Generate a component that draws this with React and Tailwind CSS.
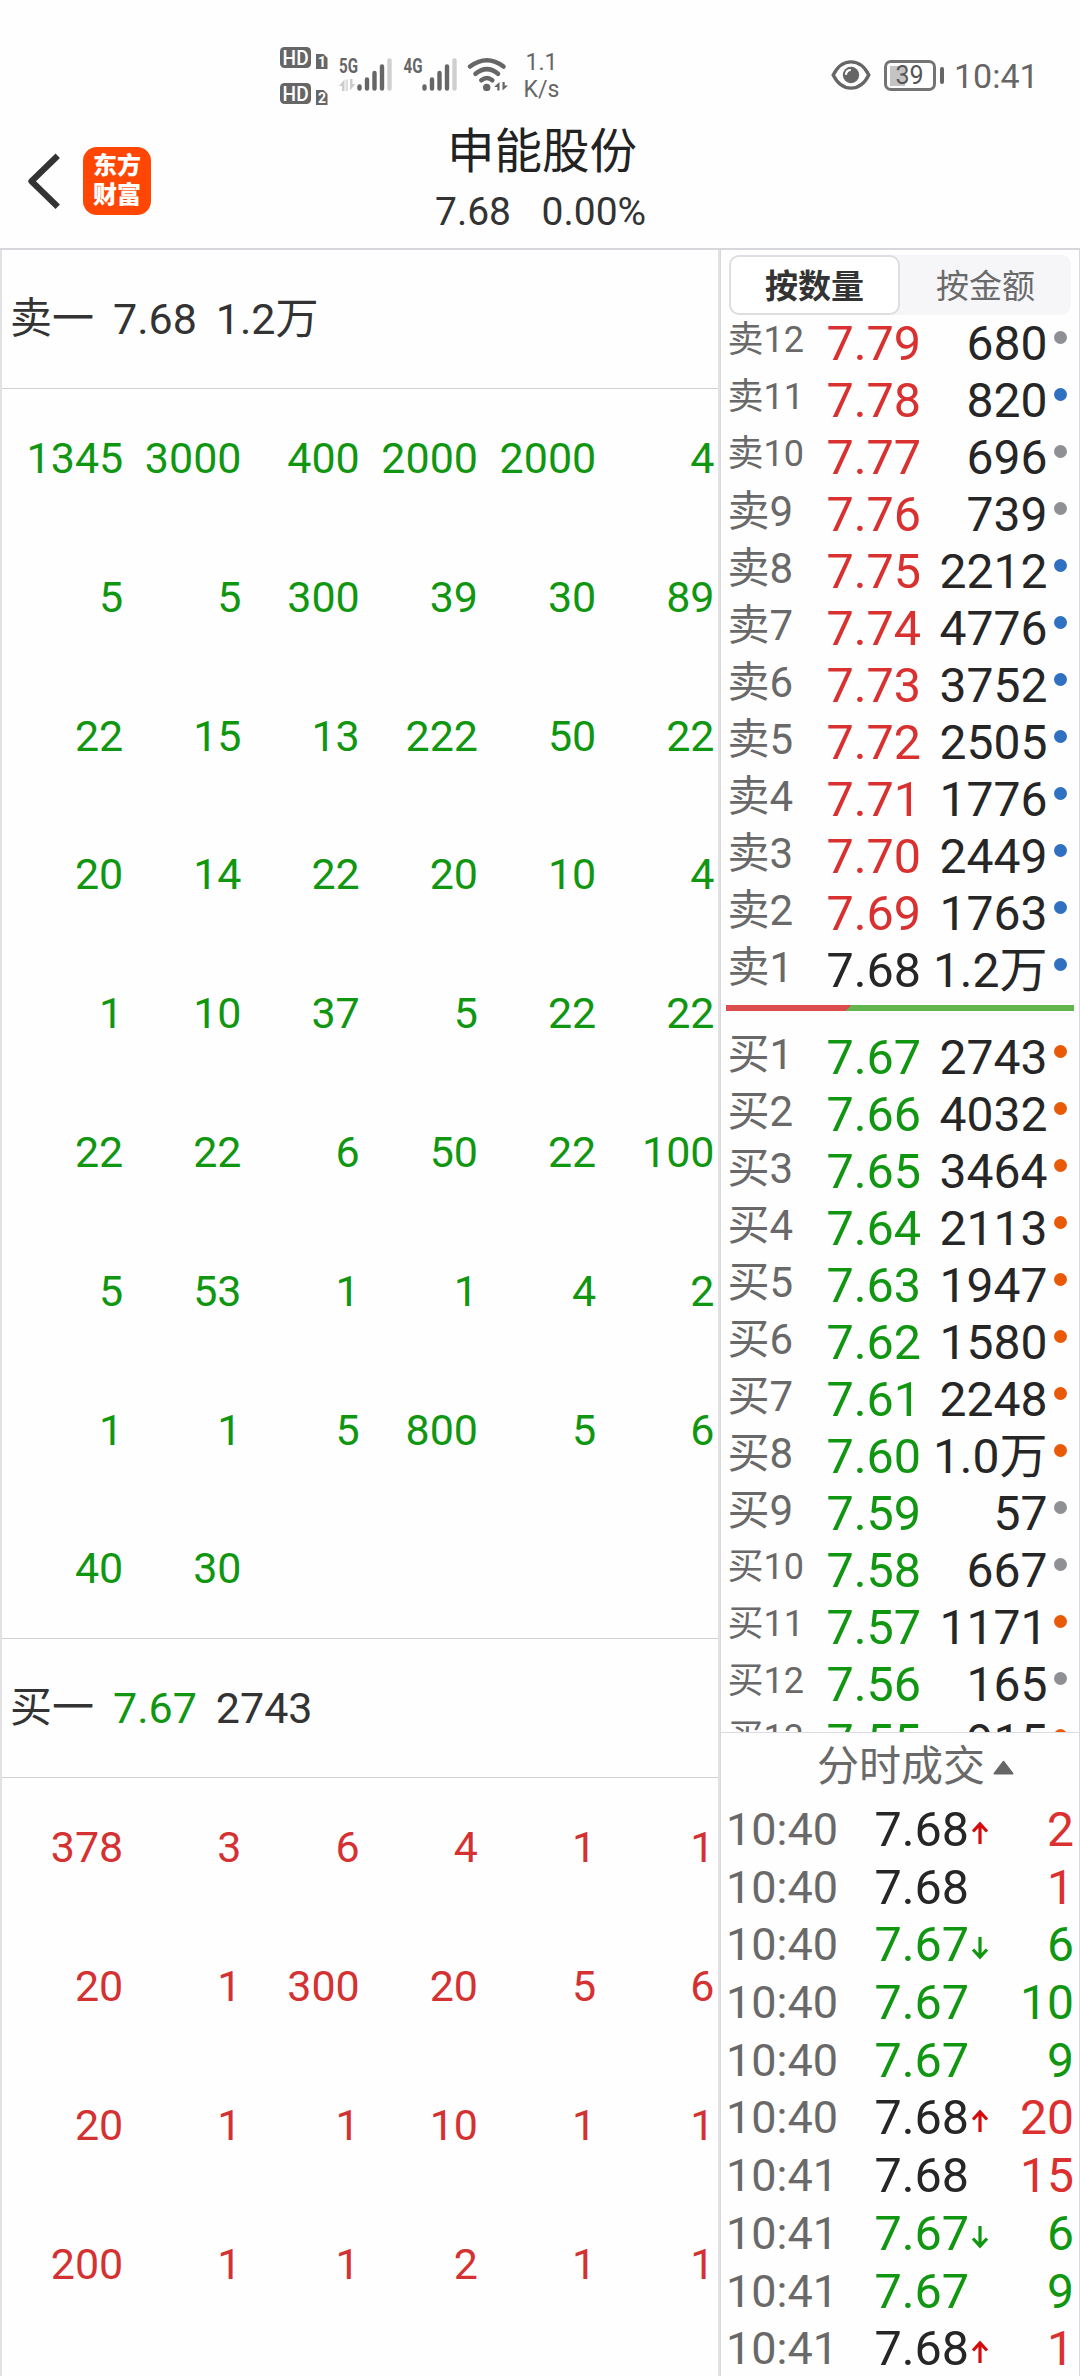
import React from "react";

const SELLS = [
  ["卖12", "7.79", "680", "gray"],
  ["卖11", "7.78", "820", "blue"],
  ["卖10", "7.77", "696", "gray"],
  ["卖9", "7.76", "739", "gray"],
  ["卖8", "7.75", "2212", "blue"],
  ["卖7", "7.74", "4776", "blue"],
  ["卖6", "7.73", "3752", "blue"],
  ["卖5", "7.72", "2505", "blue"],
  ["卖4", "7.71", "1776", "blue"],
  ["卖3", "7.70", "2449", "blue"],
  ["卖2", "7.69", "1763", "blue"],
  ["卖1", "7.68", "1.2万", "blue"],
];

const BUYS = [
  ["买1", "7.67", "2743", "orange"],
  ["买2", "7.66", "4032", "orange"],
  ["买3", "7.65", "3464", "orange"],
  ["买4", "7.64", "2113", "orange"],
  ["买5", "7.63", "1947", "orange"],
  ["买6", "7.62", "1580", "orange"],
  ["买7", "7.61", "2248", "orange"],
  ["买8", "7.60", "1.0万", "orange"],
  ["买9", "7.59", "57", "gray"],
  ["买10", "7.58", "667", "gray"],
  ["买11", "7.57", "1171", "orange"],
  ["买12", "7.56", "165", "gray"],
  ["买13", "7.55", "915", "orange"],
];

const SELL_QUEUE = [
  1345, 3000, 400, 2000, 2000, 4,
  5, 5, 300, 39, 30, 89,
  22, 15, 13, 222, 50, 22,
  20, 14, 22, 20, 10, 4,
  1, 10, 37, 5, 22, 22,
  22, 22, 6, 50, 22, 100,
  5, 53, 1, 1, 4, 2,
  1, 1, 5, 800, 5, 6,
  40, 30,
];

const BUY_QUEUE = [
  378, 3, 6, 4, 1, 1,
  20, 1, 300, 20, 5, 6,
  20, 1, 1, 10, 1, 1,
  200, 1, 1, 2, 1, 1,
];

const TRADES = [
  ["10:40", "7.68", "up", 2, "red"],
  ["10:40", "7.68", "", 1, "red"],
  ["10:40", "7.67", "down", 6, "green"],
  ["10:40", "7.67", "", 10, "green"],
  ["10:40", "7.67", "", 9, "green"],
  ["10:40", "7.68", "up", 20, "red"],
  ["10:41", "7.68", "", 15, "red"],
  ["10:41", "7.67", "down", 6, "green"],
  ["10:41", "7.67", "", 9, "green"],
  ["10:41", "7.68", "up", 1, "red"],
];

const DOTS = { gray: "bg-[#8f8f96]", blue: "bg-[#3070c0]", orange: "bg-[#e85a08]" };

function priceColor(price) {
  if (price === "7.68") return "text-[#262626]";
  return price > "7.68" ? "text-[#d93030]" : "text-[#109610]";
}

function SignalBars({ x }) {
  return (
    <g strokeWidth="4.4" strokeLinecap="round" stroke="#666">
      <path d={`M${x} 88.6V86.4M${x + 7.5} 88.6V79.4M${x + 15} 88.6V73M${x + 22.5} 88.6V66.4`} />
      <path d={`M${x + 30} 88.6V60.4`} stroke="#cfcfcf" />
    </g>
  );
}

function StatusBar() {
  return (
    <div className="flex h-[110px] shrink-0 items-start text-[#666]">
      <svg className="ml-[275px] mt-10 shrink-0" width="240" height="70" viewBox="275 40 240 70" fill="none">
        {[0, 36].map((dy, i) => (
          <g key={dy}>
            <rect x="280" y={47 + dy} width="31" height="21" rx="4.5" fill="#666" />
            <text x="282.6" y={64.5 + dy} fontSize="20.5" fontWeight="500" fill="#fff" textLength="26" lengthAdjust="spacingAndGlyphs">HD</text>
            <path d={`M316 ${54 + dy}h7.5l4 4v11h-11.500z`} fill="#666" />
            <text x="318" y={67 + dy} fontSize="14" fontWeight="700" fill="#fff">{i + 1}</text>
          </g>
        ))}
        <g fill="#666" fontWeight="700" fontSize="20.500">
          <text x="339" y="72.700" textLength="19" lengthAdjust="spacingAndGlyphs">5G</text>
          <text x="403.500" y="72.700" textLength="19" lengthAdjust="spacingAndGlyphs">4G</text>
        </g>
        <path d="M339 86l5.500-6.500v11.500h-2.500v-5zM355.500 84l-5.500 6.500V79h2.500v5z" fill="#ccc" />
        <path d="M345.500 79.500h2.500v11.500h-2.500z" fill="#ddd" />
        <SignalBars x={359.5} />
        <SignalBars x={424.5} />
        <g stroke="#666" strokeWidth="4.600" strokeLinecap="round">
          <path d="M470 66.500Q487 54 503.500 66.500" />
          <path d="M475.500 73.700Q487 64.500 498 73.700" />
          <path d="M481.300 80.200Q487 75.800 492.300 80.200" />
        </g>
        <circle cx="486.700" cy="87.400" r="3.700" fill="#666" />
        <path d="M494 87l5.500-5v8.500h-2.200V87zM508 85.500l-5.500 5V82h2.200v3.500z" fill="#666" />
      </svg>
      <div className="ml-[8.500px] mt-[49px] w-[36px] text-center text-[23px] leading-[27px]">
        <div>1.1</div>
        <div>K/s</div>
      </div>
      <svg className="ml-[271px] mt-[58px] shrink-0" width="40" height="34" viewBox="0 0 40 34" fill="none">
        <path d="M2.200 17C11-.5 29-.5 37.800 17C29 34.500 11 34.500 2.200 17Z" stroke="#666" strokeWidth="3.400" />
        <circle cx="20" cy="17" r="8.200" fill="#666" />
        <path d="M15 16Q15.500 12.500 19 12" stroke="#fff" strokeWidth="2.200" strokeLinecap="round" />
      </svg>
      <div className="ml-[13px] mt-[60px] flex h-[31px] w-[52px] items-center rounded-[7px] border-[3px] border-[#747474] bg-[linear-gradient(90deg,transparent_3px,#c4c4c4_3px,#c4c4c4_18px,transparent_18px)] bg-[length:100%_20px] bg-center bg-no-repeat">
        <span className="w-full text-center text-[25px] leading-[26px] text-[#555]">39</span>
      </div>
      <div className="ml-1 mt-[67px] h-[17px] w-1 rounded-full bg-[#666]" />
      <div className="ml-[10.500px] mt-[56px] text-[34px] leading-10">10:41</div>
    </div>
  );
}

function Header() {
  return (
    <div className="flex h-[140px] shrink-0 items-start border-b-2 border-[#d6d7da]">
      <svg className="ml-[25px] mt-[43px] shrink-0" width="36" height="56" viewBox="0 0 36 56" fill="none">
        <path d="M30.500 5L6.500 28.300L30.500 51.500" stroke="#333" strokeWidth="6.200" strokeLinecap="square" strokeLinejoin="round" />
      </svg>
      <div className="ml-[22px] mt-[37px] flex h-[68px] w-[68px] flex-col items-center rounded-[14px] bg-[#ff4602] pt-[5px] text-[24px] font-black leading-[29px] text-white">
        <div>东方</div>
        <div>财富</div>
      </div>
      <div className="ml-[285px] mt-[15px] flex flex-col items-start">
        <div className="ml-[11px] text-[47.500px] leading-[54px] text-[#222]">申能股份</div>
        <div className="mt-[3px] flex whitespace-pre text-[39px] leading-[60px] text-[#333]">
          <span className="-ml-px">7.68</span>
          <span className="ml-[30.500px]">0.00%</span>
        </div>
      </div>
    </div>
  );
}

function QueueTitle({ side, price, volume, priceClass }) {
  return (
    <div className="flex h-[139px] items-center gap-[19px] border-b border-[#d2d2d4] pl-2 text-[43px] leading-none text-[#333]">
      <span className="text-[42px]">{side}</span>
      <span className={priceClass}>{price}</span>
      <span>{volume}</span>
    </div>
  );
}

function Queue({ values, className }) {
  return (
    <div className={`grid w-[712.500px] grid-cols-[repeat(6,118.250px)] justify-end text-right text-[43px] leading-[138.800px] ${className}`}>
      {values.map((value, i) => (
        <div key={i} className="h-[138.800px]">{value}</div>
      ))}
    </div>
  );
}

function BookRow({ row }) {
  const [label, price, volume, dot] = row;
  return (
    <div className="flex h-[57px] items-start whitespace-nowrap">
      <div className={`w-[99px] shrink-0 leading-[53px] text-[#696969] ${label.length > 2 ? "text-[36px]" : "text-[42px]"}`}>{label}</div>
      <div className={`w-[100px] shrink-0 text-[48.500px] leading-[59px] ${priceColor(price)}`}>{price}</div>
      <div className="flex w-[121px] shrink-0 justify-end text-[48px] leading-[59px] text-[#262626]">{volume}</div>
      <div className={`ml-[6.500px] mt-[17px] size-[13px] shrink-0 rounded-full ${DOTS[dot]}`} />
    </div>
  );
}

function TradeArrow({ dir }) {
  if (!dir) return null;
  const up = dir === "up";
  return (
    <svg className="ml-[1.500px] mt-[20px] shrink-0" width="18" height="24" viewBox="0 0 18 24" fill="none" stroke={up ? "#d40c0c" : "#109610"} strokeWidth="3.200">
      <path d={up ? "M9 23V3M2 10.500L9 2.800L16 10.500" : "M9 1V21M2 13.500L9 21.200L16 13.500"} />
    </svg>
  );
}

function TradeRow({ trade }) {
  const [time, price, dir, volume, color] = trade;
  return (
    <div className="flex h-[57.700px] shrink-0 items-start leading-[57.700px]">
      <div className="w-[148.500px] shrink-0 text-[45px] text-[#696969]">{time}</div>
      <div className={`shrink-0 text-[48.500px] ${priceColor(price)}`}>{price}</div>
      <TradeArrow dir={dir} />
      <div className={`ml-auto text-[48px] ${color === "red" ? "text-[#dc3030]" : "text-[#109610]"}`}>{volume}</div>
    </div>
  );
}

export default function App() {
  return (
    <div className="flex h-[2376px] w-[1080px] flex-col overflow-hidden bg-[#fefefe] font-[Roboto,'Noto_Sans_CJK_SC',sans-serif]">
      <StatusBar />
      <Header />
      <div className="flex min-h-0 flex-1">
        <div className="w-[720px] shrink-0 overflow-hidden border-x-2 border-[#e2e2e4]">
          <QueueTitle side="卖一" price="7.68" volume="1.2万" />
          <Queue values={SELL_QUEUE} className="text-[#109610]" />
          <div className="border-t border-[#d2d2d4]">
            <QueueTitle side="买一" price="7.67" volume="2743" priceClass="text-[#109610]" />
          </div>
          <Queue values={BUY_QUEUE} className="text-[#d43232]" />
        </div>
        <div className="flex w-[360px] shrink-0 flex-col border-x border-[#d9d9db]">
          <div className="h-[1483px] shrink-0 overflow-hidden border-b border-[#dcdce0] pt-[5px]">
            <div className="ml-2 flex h-[60px] w-[342px] rounded-[10px] bg-[#f6f6f9] text-[33px] leading-[63px]">
              <div className="w-[171px] rounded-[10px] border-2 border-[#dedee0] bg-white text-center font-bold leading-[59px] text-[#333]">按数量</div>
              <div className="w-[171px] text-center text-[#6a6a6a]">按金额</div>
            </div>
            <div className="-mt-px pl-[6.500px]">
              {SELLS.map((row) => <BookRow key={row[0]} row={row} />)}
            </div>
            <div className="mb-[17px] ml-[5px] mt-[7px] h-1.5 w-[348px] bg-[linear-gradient(135deg,#dc4c4c_88.500px,#62b44c_88.500px)]" />
            <div className="pl-[6.500px]">
              {BUYS.map((row) => <BookRow key={row[0]} row={row} />)}
            </div>
          </div>
          <div className="flex h-[68px] shrink-0 items-center pl-24 text-[42px] leading-none text-[#696969]">
            <span>分时成交</span>
            <svg className="ml-2" width="21" height="15" viewBox="0 0 21 15">
              <path d="M10.500 1.800L19.500 13.500H1.500Z" fill="#666" stroke="#666" strokeWidth="2" strokeLinejoin="round" />
            </svg>
          </div>
          <div className="flex min-h-0 flex-1 flex-col overflow-hidden pl-[5px] pr-[5px]">
            {TRADES.map((trade, i) => <TradeRow key={i} trade={trade} />)}
          </div>
        </div>
      </div>
    </div>
  );
}
